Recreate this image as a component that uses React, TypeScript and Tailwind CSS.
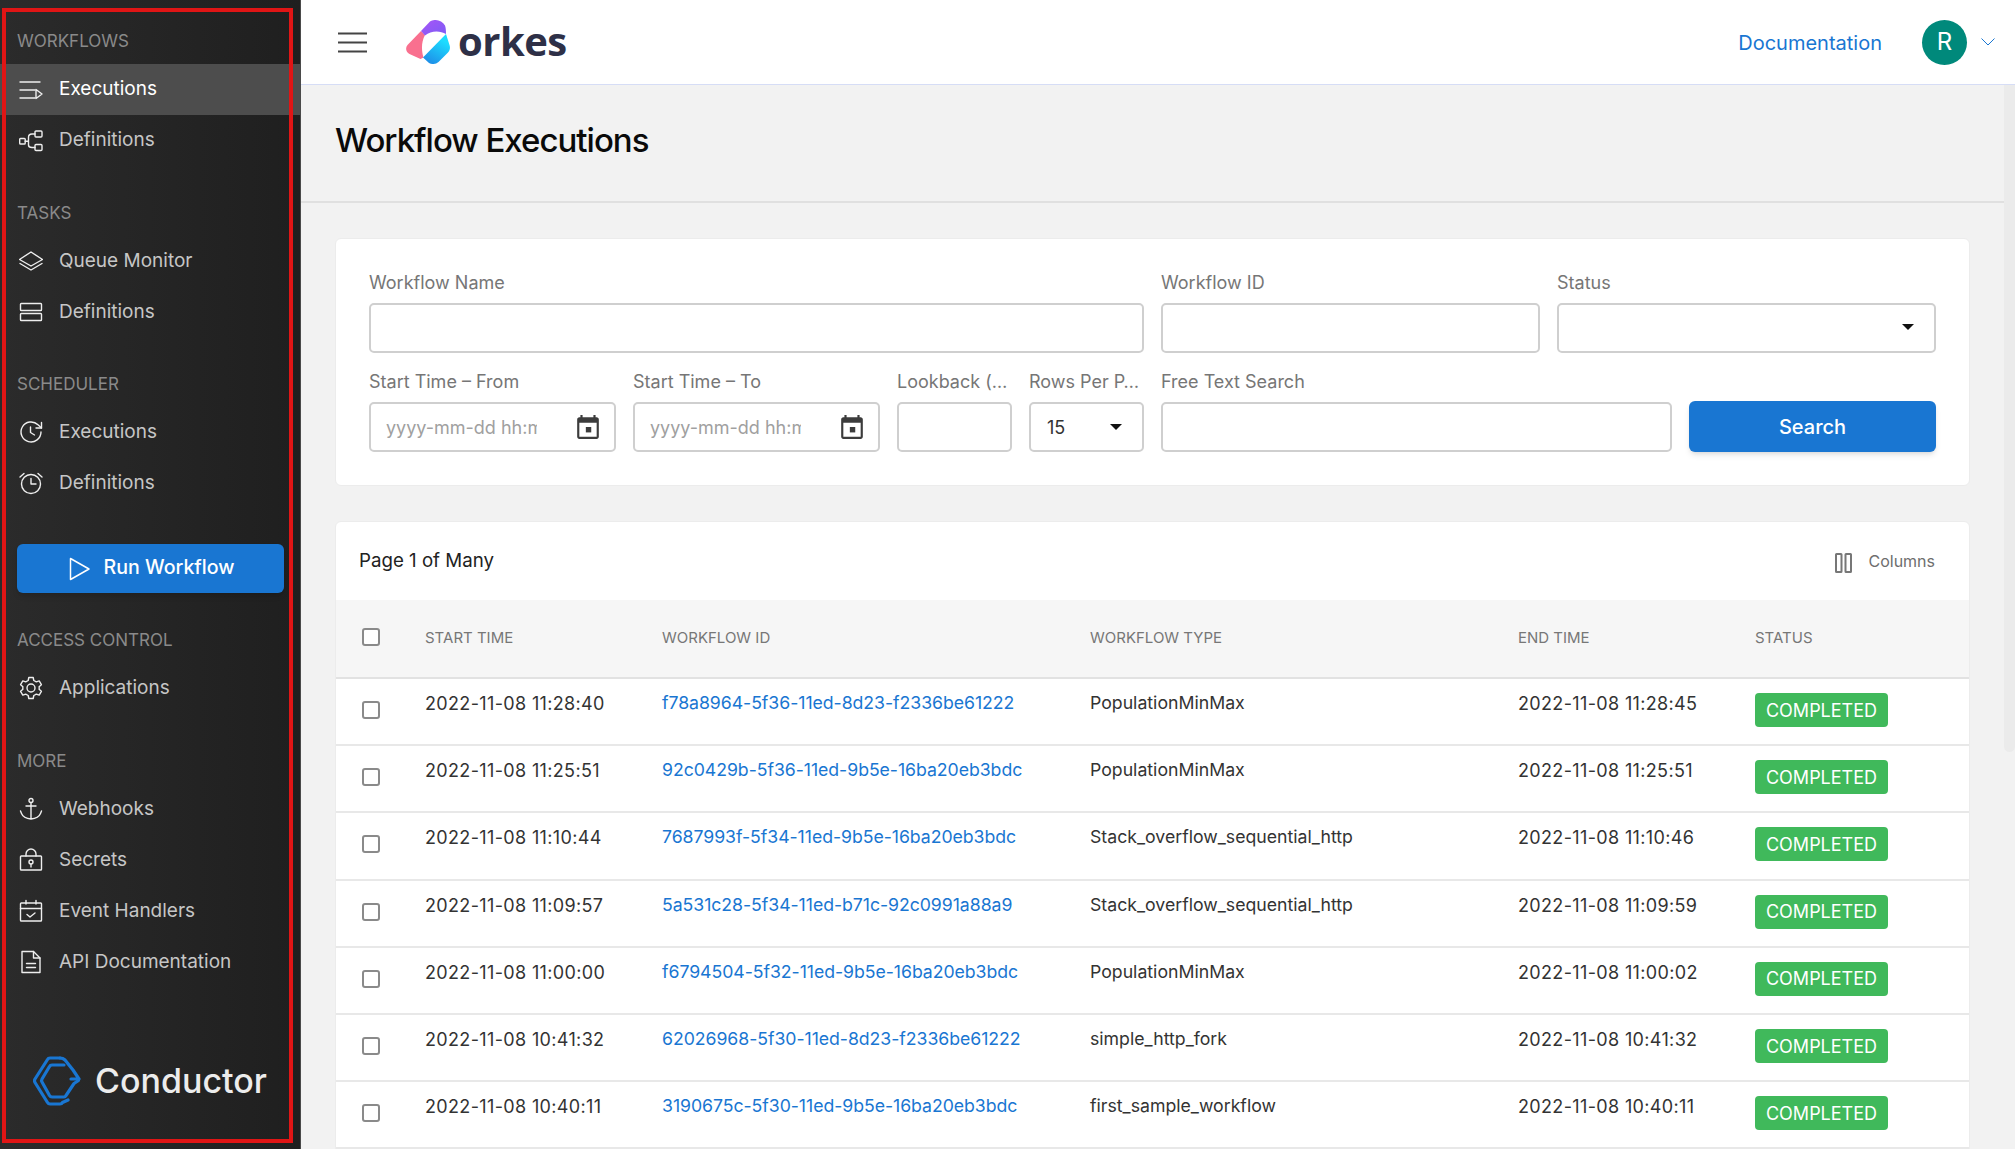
import { ReactNode } from "react";

const Ico = ({ children }: { children: ReactNode }) => (
  <svg viewBox="0 0 24 24" fill="none" stroke="currentColor" strokeWidth="1.4" strokeLinecap="round" strokeLinejoin="round" className="w-6 h-6 shrink-0">
    {children}
  </svg>
);

const icons = {
  executions: (
    <Ico>
      <path d="M1 4h20M1 12h15M1 20h15" />
      <path d="M17 11.500v9l6-4.500z" />
    </Ico>
  ),
  workflowDefs: (
    <Ico>
      <rect x="0.700" y="9.500" width="5.500" height="5.500" rx="0.800" />
      <rect x="16" y="2" width="7" height="6" rx="1" />
      <rect x="16" y="15.500" width="7" height="6" rx="1" />
      <path d="M6.200 12.200h3.300M16 5h-3c-2 0-3.500 1.500-3.500 3.500v7.500c0 1.500 1.500 2.500 3.500 2.500h3" />
    </Ico>
  ),
  queue: (
    <Ico>
      <path d="M12 3l11.500 7.500L12 17 .5 10.500z" />
      <path d="M1 14.500L12 21l11-6.500" />
    </Ico>
  ),
  taskDefs: (
    <Ico>
      <rect x="1.500" y="3.500" width="21" height="7" rx="0.800" />
      <rect x="1.500" y="13.500" width="21" height="7" rx="0.800" />
    </Ico>
  ),
  schedExec: (
    <Ico>
      <path d="M22 12a10 10 0 1 1-3-7.200L22.500 8" />
      <path d="M22.500 2.500V8H17" />
      <path d="M11.500 7v5.500l4 2.500" />
    </Ico>
  ),
  schedDefs: (
    <Ico>
      <circle cx="12" cy="13" r="9.500" />
      <path d="M12 7.500V13h5M1 6l4-3.500M23 6l-4-3.500" />
    </Ico>
  ),
  gear: (
    <Ico>
      <circle cx="12" cy="12" r="4" />
      <path d="M9.800 1.500h4.400l.6 3 2.500 1.400 2.900-1 2.200 3.800-2.300 2a7 7 0 0 1 0 2.600l2.300 2-2.200 3.800-2.900-1-2.500 1.400-.6 3H9.800l-.6-3-2.500-1.400-2.900 1-2.200-3.800 2.300-2a7 7 0 0 1 0-2.600l-2.300-2 2.200-3.800 2.900 1 2.500-1.400z" />
    </Ico>
  ),
  anchor: (
    <Ico>
      <circle cx="12" cy="3.500" r="2" />
      <path d="M12 5.500V22M7 9h10M1.500 14l1 2.500c1 2.500 5 5 9.500 5.500 4.500-.5 8.500-3 9.500-5.500l1-2.500" />
    </Ico>
  ),
  lock: (
    <Ico>
      <rect x="1.500" y="8" width="21" height="14" rx="0.800" />
      <path d="M7 8V6a5 5 0 0 1 10 0v2" />
      <circle cx="12" cy="14" r="2" />
      <path d="M12 16v3" />
    </Ico>
  ),
  calendar: (
    <Ico>
      <rect x="1.500" y="4" width="21" height="18" rx="0.800" />
      <path d="M1.500 9.500h21M7 1.500V5M17 1.500V5M8 15.500l3 2.500 5-4" />
    </Ico>
  ),
  doc: (
    <Ico>
      <path d="M3 1.500h11.500L21 8v14.500H3z" />
      <path d="M14.500 1.500V8H21M7.500 13.500h9M7.500 17.500h9" />
    </Ico>
  ),
};

const NavItem = ({ icon, label, active, top }: { icon: ReactNode; label: string; active?: boolean; top?: boolean }) => (
  <div className={`h-[51px] flex items-center gap-[16px] pl-[19px] text-[19px] ${active ? "bg-[#4d4d4d] text-white" : "text-[#c6c6c6]"}`}>
    <span className="text-[#eeeeee] flex">{icon}</span>
    <span className={top ? "" : "mt-[2px]"}>{label}</span>
  </div>
);

const SectionLabel = ({ children, className }: { children: string; className: string }) => (
  <div className={`h-5 pl-[17px] text-[17px] leading-[22px] text-[#8a8a8a] ${className}`}>{children}</div>
);

const Sidebar = () => (
  <aside className="w-[301px] shrink-0 h-full flex flex-col pt-[30px] bg-linear-to-r from-[#2b2b2b] to-[#1f1f1f] border-r border-[#4a4a4a]">
    <SectionLabel className="mb-[14px]">WORKFLOWS</SectionLabel>
    <NavItem icon={icons.executions} label="Executions" active top />
    <NavItem icon={icons.workflowDefs} label="Definitions" top />
    <SectionLabel className="mt-[36px] mb-[13px]">TASKS</SectionLabel>
    <NavItem icon={icons.queue} label="Queue Monitor" />
    <NavItem icon={icons.taskDefs} label="Definitions" />
    <SectionLabel className="mt-[36px] mb-[13px]">SCHEDULER</SectionLabel>
    <NavItem icon={icons.schedExec} label="Executions" />
    <NavItem icon={icons.schedDefs} label="Definitions" />
    <button className="mt-[36px] ml-[17px] w-[267px] h-[49px] shrink-0 rounded-[6px] bg-[#1976d2] text-white text-[19.600px] font-medium flex items-center justify-center gap-[13px] shadow-md">
      <svg viewBox="0 0 24 24" fill="none" stroke="currentColor" strokeWidth="1.500" strokeLinejoin="round" className="w-6 h-6">
        <path d="M3.500 1.500v21L22 12z" />
      </svg>
      <span className="-mt-[2px]">Run Workflow</span>
    </button>
    <SectionLabel className="mt-[36px] mb-[13px]">ACCESS CONTROL</SectionLabel>
    <NavItem icon={icons.gear} label="Applications" />
    <SectionLabel className="mt-[37px] mb-[13px]">MORE</SectionLabel>
    <NavItem icon={icons.anchor} label="Webhooks" />
    <NavItem icon={icons.lock} label="Secrets" />
    <NavItem icon={icons.calendar} label="Event Handlers" />
    <NavItem icon={icons.doc} label="API Documentation" />
    <div className="mt-[69px] ml-[33px] flex items-center gap-[14px]">
      <svg viewBox="0 0 48 50" fill="none" stroke="#1976d2" strokeWidth="3.200" strokeLinecap="round" strokeLinejoin="round" className="w-[48px] h-[50px]">
        <path d="M27 2H17c-1 0-2 .5-2.500 1.500L2 23c-.6 1-.6 2.500 0 3.500l12.500 20c.6 1 1.500 1.500 2.500 1.500h10c1 0 2-.5 2.500-1.500L35 44" />
        <path d="M27 2c2 0 3.500.5 5 2l8 10 6 9h-8" />
        <path d="M31 9H19c-1 0-2 .5-2.500 1.500L9 23c-.6 1-.6 2 0 3l7.500 13.500c.6 1 1.500 1.500 2.500 1.500h12c1 0 1.500-.5 2-1.500l8-12 4.500-3" />
      </svg>
      <span className="text-[34px] font-medium text-[#ececec] leading-none">Conductor</span>
    </div>
  </aside>
);

const OrkesLogo = () => (
  <svg viewBox="0 0 44 44" className="w-11 h-11 shrink-0">
    <defs>
      <linearGradient id="orkesPurple" x1="0" y1="0" x2="1" y2="1">
        <stop offset="0" stopColor="#a855f7" />
        <stop offset="1" stopColor="#7c5cf5" />
      </linearGradient>
      <linearGradient id="orkesCyan" x1="0.700" y1="0.200" x2="0.300" y2="1">
        <stop offset="0" stopColor="#1cdcff" />
        <stop offset="1" stopColor="#1e8fe8" />
      </linearGradient>
    </defs>
    <path d="M15 11L1.500 25c-2.500 3-1.500 7 2 9l11 5 3-1.500c-2-7-2.500-15 1.500-22.500z" fill="#f9708f" />
    <path d="M15 11l9-9.500c4-3 12-1.500 15 4 .8 2 1 5 1 8.500-6-3.500-15-3.500-21 1.500z" fill="url(#orkesPurple)" />
    <path d="M40 14l3.500 11c1 3 .3 5.500-1.500 7.500L32.500 42c-3 2.500-6.500 2.500-9.500 1L17 37.500z" fill="url(#orkesCyan)" />
  </svg>
);

const Header = () => (
  <header className="h-[85px] shrink-0 bg-white border-b border-[#d6ddf6] flex items-center pl-[37px] pr-5">
    <svg viewBox="0 0 29 21" className="w-[29px] h-[21px] mr-[39px]" fill="none" stroke="#444444" strokeWidth="2.200">
      <path d="M0 1.500h29M0 10.500h29M0 19.500h29" />
    </svg>
    <OrkesLogo />
    <span className="ml-[8px] -mt-[3px] text-[40px] font-bold leading-none tracking-[-0.5px] text-[#2e3047] font-['Open_Sans',sans-serif]">orkes</span>
    <a className="ml-auto mt-[1px] text-[20px] text-[#1976d2]">Documentation</a>
    <div className="ml-[40px] w-[45px] h-[45px] rounded-full bg-[#00897b] text-white text-[24px] flex items-center justify-center">R</div>
    <svg viewBox="0 0 14 8" className="ml-[14px] w-[14px] h-2" fill="none" stroke="#1976d2" strokeWidth="1">
      <path d="M.5.500L7 7l6.500-6.500" />
    </svg>
  </header>
);

const Field = ({ label, className, children }: { label: string; className: string; children?: ReactNode }) => (
  <div className={`flex flex-col gap-2 min-w-0 ${className}`}>
    <div className="h-6 text-[18px] leading-6 text-[#767676] whitespace-nowrap">{label}</div>
    <div className="h-[50px] rounded-[5px] border-2 border-[#cfcfcf] bg-white flex items-center text-[18px] text-[#333333]">{children}</div>
  </div>
);

const Caret = ({ className }: { className: string }) => <span className={`w-0 h-0 border-x-[6px] border-x-transparent border-t-[6px] border-t-[#111111] ${className}`} />;

const DateField = ({ label }: { label: string }) => (
  <Field label={label} className="w-[247px]">
    <input placeholder="yyyy-mm-dd hh:mm" className="ml-[15px] w-[151px] text-[18px] outline-none placeholder:text-[#a0a0a0]" />
    <svg viewBox="0 0 24 24" fill="#3c3c3c" className="ml-auto mr-[13px] w-[26px] h-[26px]">
      <path d="M20 3h-1V1h-2v2H7V1H5v2H4c-1.100 0-2 .9-2 2v16c0 1.100.9 2 2 2h16c1.100 0 2-.9 2-2V5c0-1.100-.9-2-2-2zm0 18H4V8h16v13z" />
      <path d="M10 12h5v5h-5z" />
    </svg>
  </Field>
);

const SearchCard = () => (
  <section className="bg-white rounded-[6px] border border-[#ececec] px-[33px] pt-[32px] pb-[33px] flex flex-col gap-[17px]">
    <div className="flex gap-[17px]">
      <Field label="Workflow Name" className="w-[775px]" />
      <Field label="Workflow ID" className="w-[379px]" />
      <Field label="Status" className="flex-1">
        <Caret className="ml-auto mr-[20px] -mt-[2px]" />
      </Field>
    </div>
    <div className="flex gap-[17px]">
      <DateField label="Start Time – From" />
      <DateField label="Start Time – To" />
      <Field label="Lookback (…" className="w-[115px]" />
      <Field label="Rows Per P…" className="w-[115px]">
        <span className="ml-4">15</span>
        <Caret className="ml-auto mr-[20px]" />
      </Field>
      <Field label="Free Text Search" className="flex-1" />
      <button className="self-end w-[247px] h-[51px] rounded-[6px] bg-[#1976d2] text-white text-[20px] font-medium shadow-md">Search</button>
    </div>
  </section>
);

const rows = [
  ["2022-11-08 11:28:40", "f78a8964-5f36-11ed-8d23-f2336be61222", "PopulationMinMax", "2022-11-08 11:28:45"],
  ["2022-11-08 11:25:51", "92c0429b-5f36-11ed-9b5e-16ba20eb3bdc", "PopulationMinMax", "2022-11-08 11:25:51"],
  ["2022-11-08 11:10:44", "7687993f-5f34-11ed-9b5e-16ba20eb3bdc", "Stack_overflow_sequential_http", "2022-11-08 11:10:46"],
  ["2022-11-08 11:09:57", "5a531c28-5f34-11ed-b71c-92c0991a88a9", "Stack_overflow_sequential_http", "2022-11-08 11:09:59"],
  ["2022-11-08 11:00:00", "f6794504-5f32-11ed-9b5e-16ba20eb3bdc", "PopulationMinMax", "2022-11-08 11:00:02"],
  ["2022-11-08 10:41:32", "62026968-5f30-11ed-8d23-f2336be61222", "simple_http_fork", "2022-11-08 10:41:32"],
  ["2022-11-08 10:40:11", "3190675c-5f30-11ed-9b5e-16ba20eb3bdc", "first_sample_workflow", "2022-11-08 10:40:11"],
];

const Check = () => <span className="block ml-[26px] mb-[3px] w-[18px] h-[18px] rounded-[3px] border-2 border-[#8a8a8a] bg-white" />;

const ExecutionsTable = () => (
  <section className="mt-[35px] bg-white rounded-t-[6px] border border-[#ececec]">
    <div className="h-[78px] flex items-center pl-[23px] pr-[34px]">
      <span className="text-[18.700px] text-[#222222]">Page 1 of Many</span>
      <svg viewBox="0 0 17 20" fill="none" stroke="#777777" strokeWidth="2" className="ml-auto w-[17px] h-5 mt-[3px]">
        <rect x="1" y="1" width="5.500" height="18" rx="0.500" />
        <rect x="10.500" y="1" width="5.500" height="18" rx="0.500" />
      </svg>
      <span className="ml-4 text-[16px] text-[#6e6e6e]">Columns</span>
    </div>
    <div className="h-[79px] grid grid-cols-[89px_237px_428px_428px_237px_1fr] items-center bg-[#f6f6f6] border-b-2 border-[#e2e2e2] text-[15px] text-[#777777]">
      <Check />
      <span>START TIME</span>
      <span>WORKFLOW ID</span>
      <span>WORKFLOW TYPE</span>
      <span>END TIME</span>
      <span>STATUS</span>
    </div>
    {rows.map((r) => (
      <div key={r[1]} className="h-[67.200px] grid grid-cols-[89px_237px_428px_428px_237px_1fr] items-center border-b-2 border-[#e8e8e8] text-[17.700px] text-[#333333]">
        <Check />
        <span className="self-start mt-[11px] text-[18px] tracking-[0.35px]">{r[0]}</span>
        <a className="self-start mt-[11px] text-[#1976d2] tracking-[-0.05px]">{r[1]}</a>
        <span className="self-start mt-[11px]">{r[2]}</span>
        <span className="self-start mt-[11px] text-[18px] tracking-[0.35px]">{r[3]}</span>
        <span className="w-[133px] h-[34px] mb-[3px] rounded-[4px] bg-[#40b95b] text-white text-[18px] flex items-center justify-center">COMPLETED</span>
      </div>
    ))}
  </section>
);

export default function App() {
  return (
    <div className="relative h-screen w-full overflow-hidden flex bg-[#f2f2f2] font-['Inter',sans-serif]">
      <Sidebar />
      <div className="flex-1 min-w-0 flex flex-col">
        <Header />
        <div className="flex-1 min-h-0 flex">
          <main className="flex-1 min-w-0">
            <div className="h-[118px] flex items-center pl-[34px] pb-[5px] border-b-2 border-[#e0e0e0]">
              <h1 className="text-[33px] font-medium tracking-[-1px] text-[#0a0a0a]">Workflow Executions</h1>
            </div>
            <div className="pl-[34px] pr-[34px] pt-[35px]">
              <SearchCard />
              <ExecutionsTable />
            </div>
          </main>
          <div className="w-[11px] shrink-0">
            <div className="h-[667px] bg-[#ebebeb] rounded-b-[6px]" />
          </div>
        </div>
      </div>
      <div className="absolute left-[2px] top-[8px] w-[291px] h-[1135px] border-4 border-[#e01515] pointer-events-none" />
    </div>
  );
}
